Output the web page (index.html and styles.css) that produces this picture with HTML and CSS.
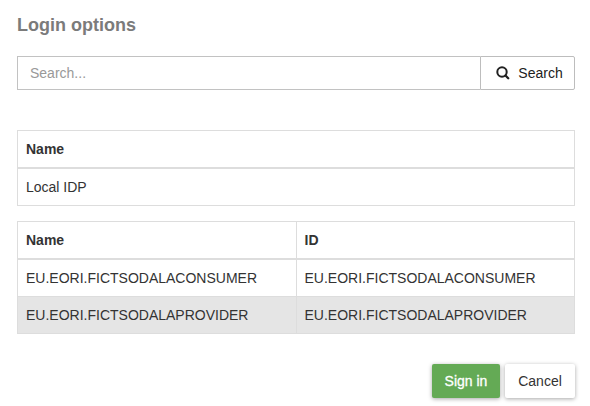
FILE: index.html
```html
<!DOCTYPE html>
<html lang="en">
<head>
<meta charset="utf-8">
<title>Login options</title>
<link rel="stylesheet" href="styles.css">
</head>
<body>
<main class="dialog">
  <h1 class="title">Login options</h1>
  <div class="search">
    <input class="search-input" type="text" placeholder="Search...">
    <button class="search-button" type="button">
      <svg class="search-icon" viewBox="0 0 14 14" width="14" height="14"><circle cx="6" cy="6" r="4.7" fill="none" stroke="currentColor" stroke-width="2"/><path d="M9.5 9.5l2.7 2.7" stroke="currentColor" stroke-width="2.3" stroke-linecap="round"/></svg>
      <span>Search</span>
    </button>
  </div>
  <table class="table local">
    <thead><tr><th>Name</th></tr></thead>
    <tbody><tr><td>Local IDP</td></tr></tbody>
  </table>
  <table class="table parties">
    <thead><tr><th>Name</th><th>ID</th></tr></thead>
    <tbody>
      <tr><td>EU.EORI.FICTSODALACONSUMER</td><td>EU.EORI.FICTSODALACONSUMER</td></tr>
      <tr class="selected"><td>EU.EORI.FICTSODALAPROVIDER</td><td>EU.EORI.FICTSODALAPROVIDER</td></tr>
    </tbody>
  </table>
  <div class="actions">
    <button class="button primary" type="button">Sign in</button>
    <button class="button" type="button">Cancel</button>
  </div>
</main>
</body>
</html>
```
FILE: styles.css
```css
* { box-sizing: border-box; }
body {
  margin: 0;
  background: #fff;
  color: #333;
  font: 14px/20px "Liberation Sans", Arial, sans-serif;
}
.dialog { min-height: 406px; padding: 15px 15px 0 17px; }
.title {
  margin: 0;
  font-size: 18px;
  line-height: 20px;
  font-weight: bold;
  color: #7b7b7b;
}
.search { display: flex; height: 34px; margin-top: 21px; margin-bottom: 40px; }
.search-input {
  flex: 1;
  min-width: 0;
  padding: 0 12px;
  border: 1px solid #c2c2c2;
  border-right: 0;
  border-radius: 0;
  font: inherit;
}
.search-input::placeholder { color: #999; opacity: 1; }
.search-button {
  display: flex;
  align-items: center;
  justify-content: center;
  gap: 8px;
  width: 95px;
  padding: 0 0 0 4px;
  border: 1px solid #bdbdbd;
  border-radius: 0 2px 2px 0;
  background: #fff;
  color: #212121;
  font: inherit;
}
.table {
  width: 558px;
  border-collapse: collapse;
  table-layout: fixed;
  margin-bottom: 15px;
}
.table th, .table td {
  height: 37px;
  padding: 0 8px;
  border: 1px solid #ddd;
  text-align: left;
}
.table th { height: 37px; border-bottom-width: 2px; font-weight: 700; }
.table tbody tr:first-child td { height: 38px; }
.selected { background: #e5e5e5; }
.actions { display: flex; justify-content: flex-end; gap: 5px; margin-top: 30px; }
.button {
  width: 70px;
  height: 34px;
  padding: 0;
  border: 0;
  border-radius: 2px;
  background: #fff;
  color: #333;
  font: inherit;
  box-shadow: 0 1px 4px rgba(0, 0, 0, .35);
}
.primary { width: 68px; background: #64aa55; color: #fff; -webkit-text-stroke: .3px #fff; }
```
